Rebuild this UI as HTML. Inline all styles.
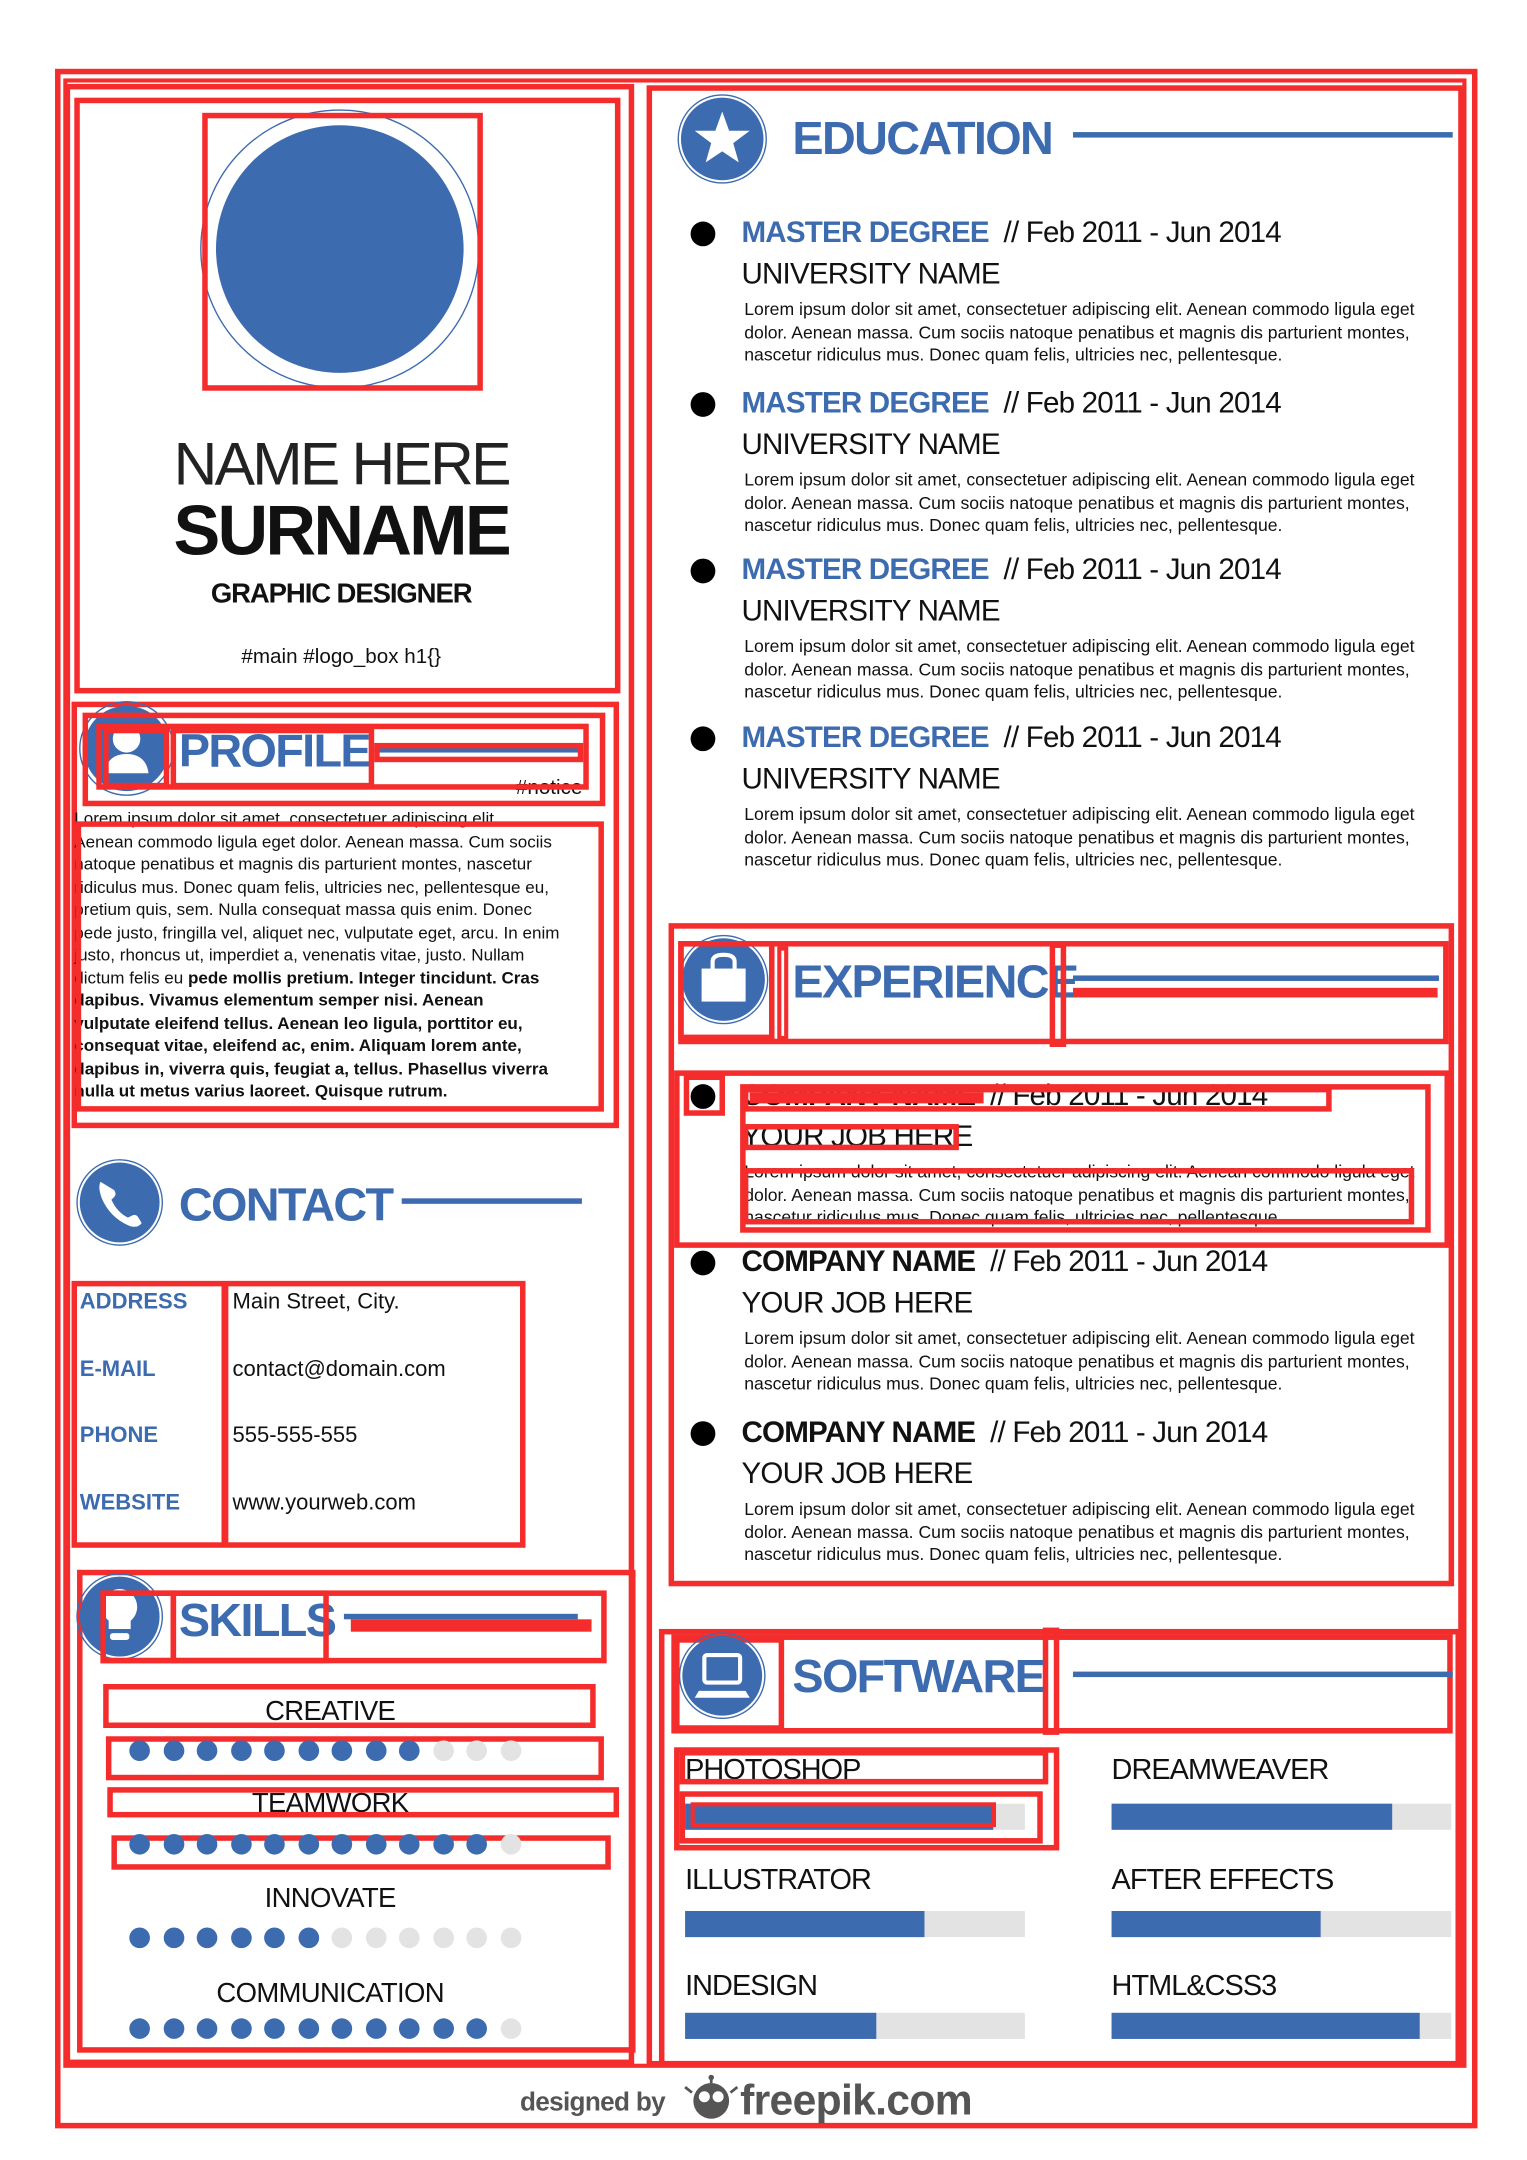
<!DOCTYPE html>
<html><head><meta charset="utf-8">
<style>
html,body{margin:0;padding:0;background:#fff;width:1527px;height:2160px;overflow:hidden}
#s{position:absolute;left:0;top:0;width:1110px;height:1570px;transform:scale(1.37568,1.3758);transform-origin:0 0;font-family:"Liberation Sans",sans-serif;color:#111}
.a{position:absolute}
.t{position:absolute;white-space:nowrap;line-height:1}
.r{position:absolute;border:4px solid #f42c2c;box-sizing:border-box}
.r3{position:absolute;border:3px solid #f42c2c;box-sizing:border-box}
.b{color:#3d6baf;font-weight:bold}
.h{font-size:34px;font-weight:bold;color:#3d6baf;letter-spacing:-1.2px}
.ln{position:absolute;height:4px;background:#3d6baf}
.dot{position:absolute;width:15px;height:15px;border-radius:50%;background:#3d6baf}
.dg{background:#e3e3e3}
.lor{font-size:12.8px;color:#111}
.bar{position:absolute;height:19px;background:#e3e3e3}
.bar i{position:absolute;left:0;top:0;bottom:0;background:#3d6baf}
.sw{font-size:21px;letter-spacing:-0.7px}
</style></head><body><div id="s">

<div class="r" style="left:40px;top:50px;width:1034px;height:1497px"></div>
<div class="r3" style="left:46px;top:57px;width:1020px;height:1446px"></div>
<div class="r" style="left:47px;top:61px;width:414px;height:1440px"></div>
<div class="r" style="left:470px;top:62px;width:594px;height:1440px"></div>

<div class="r" style="left:54px;top:71px;width:397px;height:433px"></div>
<svg class="a" style="left:140px;top:75px" width="215" height="215">
 <circle cx="107" cy="106" r="101" fill="none" stroke="#3d6baf" stroke-width="1"/>
 <circle cx="107" cy="106" r="90" fill="#3d6baf"/>
</svg>
<div class="r" style="left:147px;top:82px;width:204px;height:202px"></div>
<div class="t" style="left:0;width:496px;text-align:center;top:316px;font-size:44px;letter-spacing:-2px;color:#222">NAME HERE</div>
<div class="t" style="left:0;width:496px;text-align:center;top:360px;font-size:51px;font-weight:bold;letter-spacing:-2px">SURNAME</div>
<div class="t" style="left:0;width:496px;text-align:center;top:422px;font-size:20px;font-weight:bold;letter-spacing:-0.8px">GRAPHIC DESIGNER</div>
<div class="t" style="left:0;width:496px;text-align:center;top:470px;font-size:15px">#main #logo_box h1{}</div>

<div class="r" style="left:52px;top:510px;width:398px;height:310px"></div>
<svg class="a" style="left:56px;top:508px" width="72" height="72">
 <circle cx="36" cy="36" r="34" fill="none" stroke="#3d6baf" stroke-width="1"/>
 <circle cx="36" cy="36" r="31" fill="#3d6baf"/>
 <circle cx="36" cy="29" r="10" fill="#fff"/><path d="M20 54 Q22 40 36 40 Q50 40 52 54Z" fill="#fff"/>
</svg>
<div class="t h" style="left:130px;top:529px">PROFILE</div>
<div class="ln" style="left:272px;top:543px;width:150px"></div>
<div class="t" style="left:375px;top:565px;font-size:15px">#notice</div>
<div class="r" style="left:60px;top:518px;width:380px;height:68px"></div>
<div class="r" style="left:70px;top:526px;width:358px;height:48px"></div>
<div class="r" style="left:75px;top:529px;width:48px;height:44px"></div>
<div class="r" style="left:124px;top:529px;width:148px;height:44px"></div>
<div class="r" style="left:272px;top:540px;width:152px;height:14px"></div>
<div class="a" style="left:54px;top:587px;font-size:12.4px;line-height:16.5px;white-space:nowrap;width:385px;overflow:hidden">
<div>Lorem ipsum dolor sit amet, consectetuer adipiscing elit.</div>
<div>Aenean commodo ligula eget dolor. Aenean massa. Cum sociis</div>
<div>natoque penatibus et magnis dis parturient montes, nascetur</div>
<div>ridiculus mus. Donec quam felis, ultricies nec, pellentesque eu,</div>
<div>pretium quis, sem. Nulla consequat massa quis enim. Donec</div>
<div>pede justo, fringilla vel, aliquet nec, vulputate eget, arcu. In enim</div>
<div>justo, rhoncus ut, imperdiet a, venenatis vitae, justo. Nullam</div>
<div>dictum felis eu <b>pede mollis pretium. Integer tincidunt. Cras</b></div>
<div><b>dapibus. Vivamus elementum semper nisi. Aenean</b></div>
<div><b>vulputate eleifend tellus. Aenean leo ligula, porttitor eu,</b></div>
<div><b>consequat vitae, eleifend ac, enim. Aliquam lorem ante,</b></div>
<div><b>dapibus in, viverra quis, feugiat a, tellus. Phasellus viverra</b></div>
<div><b>nulla ut metus varius laoreet. Quisque rutrum.</b></div>
</div>
<div class="r" style="left:55px;top:597px;width:384px;height:211px"></div>

<svg class="a" style="left:54px;top:841px" width="66" height="66">
 <circle cx="33" cy="33" r="31" fill="none" stroke="#3d6baf" stroke-width="1"/>
 <circle cx="33" cy="33" r="29" fill="#3d6baf"/>
 <path d="M19 18 Q17 22 20 30 Q26 44 40 50 Q46 52 49 48 L46 43 Q44 41 41 43 L39 44 Q31 40 27 31 L29 29 Q31 27 29 24 Z" fill="#fff"/>
</svg>
<div class="t h" style="left:130px;top:859px">CONTACT</div>
<div class="ln" style="left:292px;top:871px;width:131px"></div>
<div class="r" style="left:52px;top:931px;width:330px;height:194px"></div>
<div class="a" style="left:161px;top:933px;width:5px;height:190px;background:#f42c2c"></div>
<div class="t b" style="left:58px;top:939px;font-size:16px">ADDRESS</div>
<div class="t b" style="left:58px;top:988px;font-size:16px">E-MAIL</div>
<div class="t b" style="left:58px;top:1036px;font-size:16px">PHONE</div>
<div class="t b" style="left:58px;top:1085px;font-size:16px">WEBSITE</div>
<div class="t" style="left:169px;top:939px;font-size:16px">Main Street, City.</div>
<div class="t" style="left:169px;top:988px;font-size:16px">contact@domain.com</div>
<div class="t" style="left:169px;top:1036px;font-size:16px">555-555-555</div>
<div class="t" style="left:169px;top:1085px;font-size:16px">www.yourweb.com</div>

<div class="r" style="left:56px;top:1141px;width:406px;height:351px"></div>
<svg class="a" style="left:54px;top:1142px" width="66" height="66">
 <circle cx="33" cy="33" r="31" fill="none" stroke="#3d6baf" stroke-width="1"/>
 <circle cx="33" cy="33" r="29" fill="#3d6baf"/>
 <path d="M33 13 A13 13 0 0 1 41 36 L41 42 L25 42 L25 36 A13 13 0 0 1 33 13Z" fill="#fff"/>
 <rect x="26" y="45" width="14" height="5" rx="2" fill="#fff"/>
</svg>
<div class="t h" style="left:130px;top:1161px">SKILLS</div>
<div class="ln" style="left:250px;top:1173px;width:170px"></div>
<div class="r" style="left:73px;top:1156px;width:368px;height:53px"></div>
<div class="r" style="left:73px;top:1156px;width:55px;height:53px"></div>
<div class="r" style="left:124px;top:1156px;width:115px;height:53px"></div>
<div class="a" style="left:255px;top:1177px;width:175px;height:9px;background:#f42c2c"></div>
<div class="t" style="left:40px;width:400px;text-align:center;top:1234px;font-size:20px;letter-spacing:-0.5px">CREATIVE</div>
<div class="t" style="left:40px;width:400px;text-align:center;top:1301px;font-size:20px;letter-spacing:-0.5px">TEAMWORK</div>
<div class="t" style="left:40px;width:400px;text-align:center;top:1370px;font-size:20px;letter-spacing:-0.5px">INNOVATE</div>
<div class="t" style="left:40px;width:400px;text-align:center;top:1439px;font-size:20px;letter-spacing:-0.5px">COMMUNICATION</div>
<div class="r" style="left:75px;top:1224px;width:358px;height:32px"></div>
<div class="r" style="left:77px;top:1262px;width:362px;height:32px"></div>
<div class="r" style="left:78px;top:1299px;width:372px;height:22px"></div>
<div class="r" style="left:81px;top:1334px;width:363px;height:25px"></div>

<svg class="a" style="left:491px;top:67px" width="68" height="68">
 <circle cx="34" cy="34" r="32" fill="none" stroke="#3d6baf" stroke-width="1"/>
 <circle cx="34" cy="34" r="30" fill="#3d6baf"/>
 <polygon points="34,14 39,28 54,28 42,37 46,51 34,43 22,51 26,37 14,28 29,28" fill="#fff"/>
</svg>
<div class="t h" style="left:576px;top:84px">EDUCATION</div>
<div class="ln" style="left:780px;top:96px;width:276px"></div>

<div class="r" style="left:486px;top:671px;width:571px;height:482px"></div>
<svg class="a" style="left:492px;top:678px" width="68" height="68">
 <circle cx="34" cy="34" r="32" fill="none" stroke="#3d6baf" stroke-width="1"/>
 <circle cx="34" cy="34" r="30" fill="#3d6baf"/>
 <rect x="18" y="26" width="32" height="24" fill="#fff"/>
 <path d="M26 27 L26 21 Q26 16 34 16 Q42 16 42 21 L42 27" fill="none" stroke="#fff" stroke-width="3"/>
</svg>
<div class="t h" style="left:576px;top:697px">EXPERIENCE</div>
<div class="ln" style="left:780px;top:709px;width:266px"></div>
<div class="r" style="left:493px;top:684px;width:560px;height:75px"></div>
<div class="r" style="left:493px;top:684px;width:70px;height:72px"></div>
<div class="r3" style="left:565px;top:688px;width:8px;height:68px"></div>
<div class="r" style="left:763px;top:685px;width:12px;height:76px"></div>
<div class="a" style="left:780px;top:718px;width:265px;height:7px;background:#f42c2c"></div>
<div id="exp"></div>

<div class="r" style="left:479px;top:1184px;width:583px;height:318px"></div>
<div class="r" style="left:488px;top:1188px;width:568px;height:72px"></div>
<div class="r" style="left:490px;top:1190px;width:80px;height:68px"></div>
<div class="r" style="left:758px;top:1183px;width:12px;height:78px"></div>
<svg class="a" style="left:492px;top:1185px" width="66" height="66">
 <circle cx="33" cy="33" r="31" fill="none" stroke="#3d6baf" stroke-width="1"/>
 <circle cx="33" cy="33" r="29" fill="#3d6baf"/>
 <rect x="20" y="18" width="26" height="20" rx="2" fill="none" stroke="#fff" stroke-width="3"/>
 <path d="M16 44 L50 44 L53 49 L13 49Z" fill="#fff"/>
</svg>
<div class="t h" style="left:576px;top:1202px">SOFTWARE</div>
<div class="ln" style="left:780px;top:1215px;width:276px"></div>
<div class="t sw" style="left:498px;top:1276px">PHOTOSHOP</div>
<div class="t sw" style="left:808px;top:1276px">DREAMWEAVER</div>
<div class="t sw" style="left:498px;top:1356px">ILLUSTRATOR</div>
<div class="t sw" style="left:808px;top:1356px">AFTER EFFECTS</div>
<div class="t sw" style="left:498px;top:1433px">INDESIGN</div>
<div class="t sw" style="left:808px;top:1433px">HTML&amp;CSS3</div>
<div class="bar" style="left:498px;top:1311px;width:247px"><i style="width:224px"></i></div>
<div class="bar" style="left:808px;top:1311px;width:247px"><i style="width:204px"></i></div>
<div class="bar" style="left:498px;top:1389px;width:247px"><i style="width:174px"></i></div>
<div class="bar" style="left:808px;top:1389px;width:247px"><i style="width:152px"></i></div>
<div class="bar" style="left:498px;top:1463px;width:247px"><i style="width:139px"></i></div>
<div class="bar" style="left:808px;top:1463px;width:247px"><i style="width:224px"></i></div>
<div class="r" style="left:490px;top:1270px;width:280px;height:75px"></div>
<div class="r" style="left:494px;top:1272px;width:268px;height:25px"></div>
<div class="r" style="left:494px;top:1302px;width:264px;height:38px"></div>
<div class="r3" style="left:502px;top:1310px;width:222px;height:18px"></div>

<div class="t" style="left:378px;top:1519px;font-size:19px;font-weight:bold;color:#555;letter-spacing:-0.5px">designed by</div>
<svg class="a" style="left:497px;top:1508px" width="40" height="34">
 <circle cx="20" cy="19" r="13" fill="#555"/><circle cx="15" cy="16" r="4" fill="#fff"/><circle cx="25" cy="16" r="4" fill="#fff"/>
 <line x1="20" y1="6" x2="20" y2="1" stroke="#555" stroke-width="2"/><circle cx="20" cy="2" r="2" fill="#555"/>
 <line x1="6" y1="13" x2="1" y2="9" stroke="#555" stroke-width="2"/><line x1="34" y1="13" x2="39" y2="9" stroke="#555" stroke-width="2"/>
</svg>
<div class="t" style="left:538px;top:1511px;font-size:31px;font-weight:bold;color:#555;letter-spacing:-0.5px">freepik.com</div>

<script>
(function(){
var s=document.getElementById('s');
function add(h){s.insertAdjacentHTML('beforeend',h);}
var rows=[[1265,9],[1333,11],[1401,6],[1467,11]];
rows.forEach(function(r){for(var i=0;i<12;i++){add('<div class="dot'+(i<r[1]?'':' dg')+'" style="left:'+(94+i*24.5)+'px;top:'+r[0]+'px"></div>');}});
var lor=['Lorem ipsum dolor sit amet, consectetuer adipiscing elit. Aenean commodo ligula eget','dolor. Aenean massa. Cum sociis natoque penatibus et magnis dis parturient montes,','nascetur ridiculus mus. Donec quam felis, ultricies nec, pellentesque.'];
function entry(T,title,blue,sub){
 add('<div class="a" style="left:502px;top:'+(T-7)+'px;width:18px;height:18px;border-radius:50%;background:#000"></div>');
 add('<div class="t" style="left:539px;top:'+(T-9)+'px;font-size:21.5px;letter-spacing:-0.6px"><b style="color:'+(blue?'#3d6baf':'#111')+'">'+title+'</b>&nbsp;&nbsp;// Feb 2011 - Jun 2014</div>');
 add('<div class="t" style="left:539px;top:'+(T+21)+'px;font-size:21.5px;letter-spacing:-0.6px">'+sub+'</div>');
 for(var i=0;i<3;i++)add('<div class="t lor" style="left:541px;top:'+(T+51+i*16.6)+'px">'+lor[i]+'</div>');
}
[168,292,413,535].forEach(function(T){entry(T,'MASTER DEGREE',1,'UNIVERSITY NAME');});
[795,916,1040].forEach(function(T){entry(T,'COMPANY NAME',0,'YOUR JOB HERE');});
function R(l,t,w,h){add('<div class="r" style="left:'+l+'px;top:'+t+'px;width:'+w+'px;height:'+h+'px"></div>');}
R(490,778,564,129);R(497,781,30,30);R(538,788,502,108);R(540,790,428,18);
add('<div class="a" style="left:545px;top:794px;width:170px;height:8px;background:#f42c2c"></div>');
R(540,817,157,19);R(540,849,488,41);
})();
</script>
</div></body></html>
